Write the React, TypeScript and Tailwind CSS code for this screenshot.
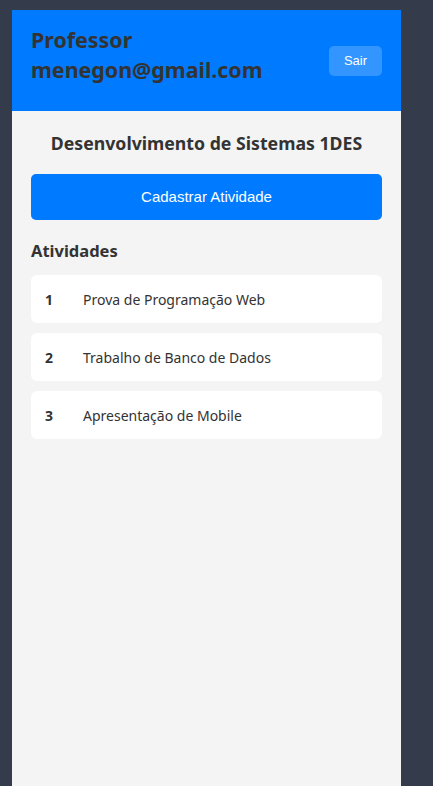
import React from 'react';

const atividades = [
  { id: 1, nome: 'Prova de Programação Web' },
  { id: 2, nome: 'Trabalho de Banco de Dados' },
  { id: 3, nome: 'Apresentação de Mobile' },
];

const App: React.FC = () => {
  return (
    <div className="min-h-screen bg-[#343b4a] pt-[10px] pl-[12px]" style={{ fontFamily: '"Noto Sans", sans-serif' }}>
      <div className="w-[389px] min-h-[776px] bg-[#f4f4f4]">
        <header className="h-[101px] bg-[#007bff] px-[19px] flex items-center justify-between">
          <h1 className="mb-[12px] text-[21.4px] leading-[30px] font-bold text-[#333]">
            Professor<br />menegon@gmail.com
          </h1>
          <button className="w-[53px] h-[30px] rounded-[5px] bg-[#3395ff] text-white text-[13px]" style={{ fontFamily: '"Liberation Sans", Arial, sans-serif' }}>
            Sair
          </button>
        </header>

        <main className="px-[19px] pt-[19px]">
          <h2 className="text-center text-[17.7px] font-bold text-[#333] leading-[26px]">
            Desenvolvimento de Sistemas 1DES
          </h2>
          <button className="mt-[18px] w-full h-[46px] rounded-[5px] bg-[#007bff] text-white text-[15px]" style={{ fontFamily: '"Liberation Sans", Arial, sans-serif' }}>
            Cadastrar Atividade
          </button>

          <h3 className="mt-[19px] text-[16.5px] font-bold text-[#333] leading-[24px]">Atividades</h3>

          <ul className="mt-[12px] flex flex-col gap-[10px]">
            {atividades.map((a) => (
              <li key={a.id} className="h-[48px] bg-white rounded-[6px] flex items-center px-[14px] text-[14px] text-[#333]">
                <span className="w-[38px] font-bold">{a.id}</span>
                <span>{a.nome}</span>
              </li>
            ))}
          </ul>
        </main>
      </div>
    </div>
  );
};

export default App;
